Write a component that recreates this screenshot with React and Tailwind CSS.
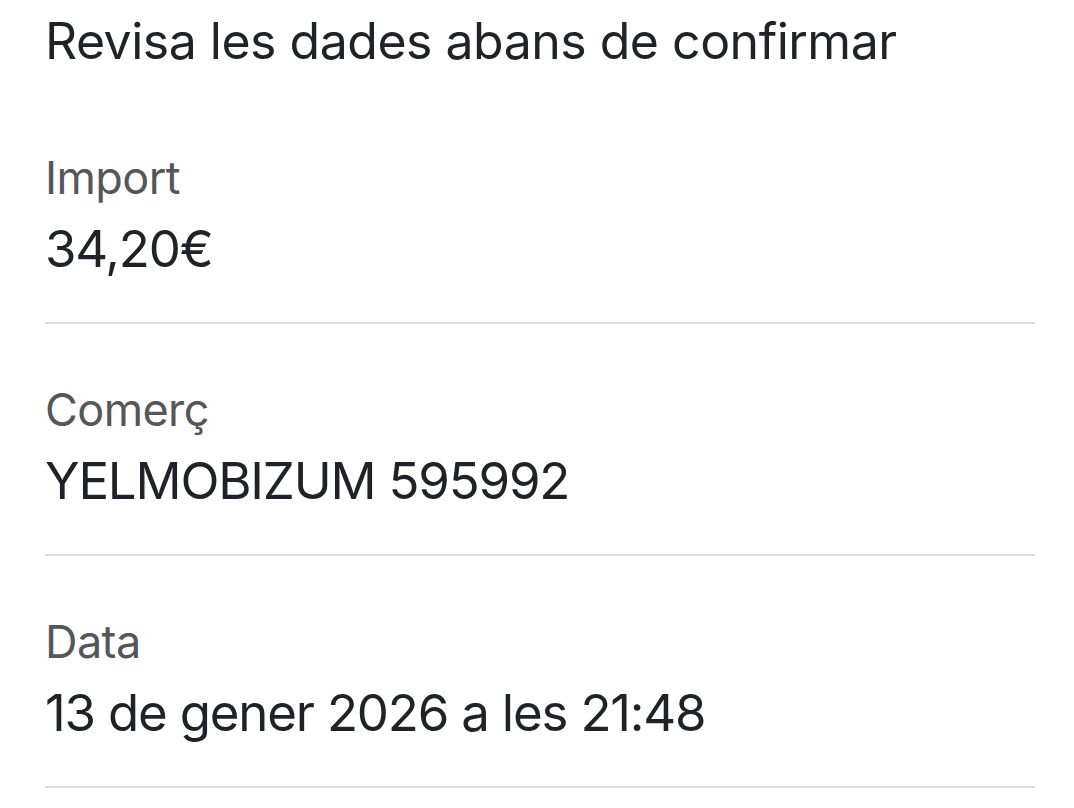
import React from 'react';

const rows = [
  { label: 'Import', value: '34,20€' },
  { label: 'Comerç', value: 'YELMOBIZUM 595992' },
  { label: 'Data', value: '13 de gener 2026 a les 21:48' },
];

export default function App() {
  return (
    <div className="min-h-[808px] bg-white pl-[45px] pr-[39px] pt-4 font-['Inter','Noto_Sans',sans-serif]">
      <h1 className="text-[50px] leading-none font-normal tracking-[-0.5px] text-[#1f2226]">
        Revisa les dades abans de confirmar
      </h1>
      <div className="mt-[26px]">
        {rows.map((row) => (
          <div key={row.label} className="pt-[63px] pb-[48px] border-b-2 border-[#dddddd]">
            <div className="text-[45px] leading-none tracking-[-0.6px] text-[#545659]">{row.label}</div>
            <div className="mt-[23px] text-[51px] leading-none tracking-[-1.2px] text-[#1f2226]">{row.value}</div>
          </div>
        ))}
      </div>
    </div>
  );
}
